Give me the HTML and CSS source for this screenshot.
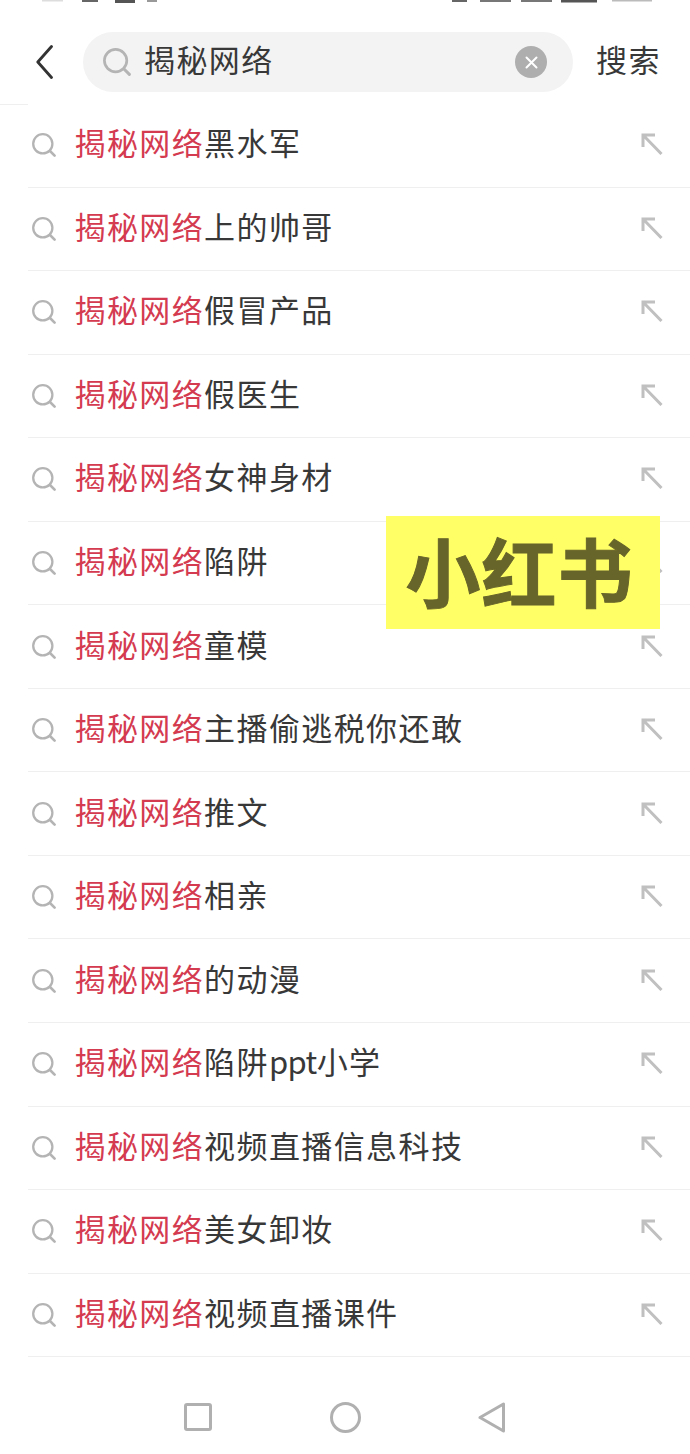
FILE: index.html
```html
<!DOCTYPE html>
<html lang="zh">
<head>
<meta charset="utf-8">
<title>搜索</title>
<link rel="stylesheet" href="styles.css">
</head>
<body>
<div class="phone">
  <svg width="0" height="0" class="defs">
    <symbol id="mag" viewBox="0 0 24 24"><circle cx="10.8" cy="10.8" r="9.6" fill="none" stroke="currentColor" stroke-width="2.3"/><path d="M18 18l4.6 4.6" fill="none" stroke="currentColor" stroke-width="2.6" stroke-linecap="round"/></symbol>
    <symbol id="arrow" viewBox="0 0 22 22"><path d="M2 14V2h12M2 2l18.500 19" fill="none" stroke="currentColor" stroke-width="3"/></symbol>
  </svg>
  <svg class="status" width="690" height="3" viewBox="0 0 690 3">
    <rect x="42" y="0" width="21" height="1.500" fill="#ddd"/>
    <rect x="82" y="0" width="16" height="2" fill="#666"/>
    <rect x="115" y="0" width="20" height="3" fill="#555"/>
    <rect x="147" y="0" width="10" height="2" fill="#999"/>
    <rect x="452" y="0" width="15" height="2" fill="#666"/>
    <rect x="480" y="0" width="31" height="2" fill="#777"/>
    <rect x="521" y="0" width="31" height="2" fill="#777"/>
    <rect x="561" y="0" width="36" height="2.500" fill="#555"/>
    <rect x="612" y="0" width="40" height="1.500" fill="#bbb"/>
  </svg>
  <header class="search-bar">
    <svg class="back" width="17" height="34" viewBox="0 0 17 34"><path d="M15.500 1.500L1.800 17l13.700 15.500" fill="none" stroke="#333" stroke-width="2.800" stroke-linecap="round" stroke-linejoin="round"/></svg>
    <div class="field">
      <svg class="field-mag"><use href="#mag"/></svg>
      <span class="query">揭秘网络</span>
      <span class="clear"><svg width="13" height="13" viewBox="0 0 13 13"><path d="M1.500 1.500l10 10M11.500 1.500l-10 10" stroke="#fff" stroke-width="2" stroke-linecap="round"/></svg></span>
    </div>
    <span class="go">搜索</span>
  </header>
  <div class="stub"></div>
  <ul class="list">
    <li class="row"><svg class="mag"><use href="#mag"/></svg><span class="txt"><em>揭秘网络</em>黑水军</span><svg class="arr"><use href="#arrow"/></svg></li>
    <li class="row"><svg class="mag"><use href="#mag"/></svg><span class="txt"><em>揭秘网络</em>上的帅哥</span><svg class="arr"><use href="#arrow"/></svg></li>
    <li class="row"><svg class="mag"><use href="#mag"/></svg><span class="txt"><em>揭秘网络</em>假冒产品</span><svg class="arr"><use href="#arrow"/></svg></li>
    <li class="row"><svg class="mag"><use href="#mag"/></svg><span class="txt"><em>揭秘网络</em>假医生</span><svg class="arr"><use href="#arrow"/></svg></li>
    <li class="row"><svg class="mag"><use href="#mag"/></svg><span class="txt"><em>揭秘网络</em>女神身材</span><svg class="arr"><use href="#arrow"/></svg></li>
    <li class="row"><svg class="mag"><use href="#mag"/></svg><span class="txt"><em>揭秘网络</em>陷阱</span><svg class="arr"><use href="#arrow"/></svg></li>
    <li class="row"><svg class="mag"><use href="#mag"/></svg><span class="txt"><em>揭秘网络</em>童模</span><svg class="arr"><use href="#arrow"/></svg></li>
    <li class="row"><svg class="mag"><use href="#mag"/></svg><span class="txt"><em>揭秘网络</em>主播偷逃税你还敢</span><svg class="arr"><use href="#arrow"/></svg></li>
    <li class="row"><svg class="mag"><use href="#mag"/></svg><span class="txt"><em>揭秘网络</em>推文</span><svg class="arr"><use href="#arrow"/></svg></li>
    <li class="row"><svg class="mag"><use href="#mag"/></svg><span class="txt"><em>揭秘网络</em>相亲</span><svg class="arr"><use href="#arrow"/></svg></li>
    <li class="row"><svg class="mag"><use href="#mag"/></svg><span class="txt"><em>揭秘网络</em>的动漫</span><svg class="arr"><use href="#arrow"/></svg></li>
    <li class="row"><svg class="mag"><use href="#mag"/></svg><span class="txt"><em>揭秘网络</em>陷阱<span class="latin">ppt</span>小学</span><svg class="arr"><use href="#arrow"/></svg></li>
    <li class="row"><svg class="mag"><use href="#mag"/></svg><span class="txt"><em>揭秘网络</em>视频直播信息科技</span><svg class="arr"><use href="#arrow"/></svg></li>
    <li class="row"><svg class="mag"><use href="#mag"/></svg><span class="txt"><em>揭秘网络</em>美女卸妆</span><svg class="arr"><use href="#arrow"/></svg></li>
    <li class="row"><svg class="mag"><use href="#mag"/></svg><span class="txt"><em>揭秘网络</em>视频直播课件</span><svg class="arr"><use href="#arrow"/></svg></li>
  </ul>
  <nav class="nav">
    <svg width="28" height="28" viewBox="0 0 28 28"><rect x="1.500" y="1.500" width="25" height="25" rx="1.500" fill="none" stroke="#b0b0b0" stroke-width="3"/></svg>
    <svg width="31" height="31" viewBox="0 0 31 31"><circle cx="15.500" cy="15.500" r="14" fill="none" stroke="#b0b0b0" stroke-width="3"/></svg>
    <svg width="27" height="31" viewBox="0 0 27 31"><path d="M2 15.500L25.500 2v27z" fill="none" stroke="#b0b0b0" stroke-width="3" stroke-linejoin="round"/></svg>
  </nav>
  <div class="stamp">小红书</div>
</div>
</body>
</html>
```
FILE: styles.css
```css
* { box-sizing: border-box; }
html, body { margin: 0; padding: 0; background: #fff; }
body { font-family: "Noto Sans CJK SC", "Noto Sans", sans-serif; }
.phone { position: relative; width: 690px; height: 1454px; overflow: hidden; background: #fff; }
.defs { position: absolute; }
.status { display: block; }
.search-bar { display: flex; align-items: center; height: 60px; margin-top: 29px; padding-left: 36px; }
.back { flex: none; margin-right: 30px; }
.field { display: flex; align-items: center; width: 490px; height: 60px; border-radius: 30px; background: #f3f3f3; padding: 0 26px 0 20px; }
.field-mag { width: 28px; height: 28px; color: #b4b4b4; flex: none; margin-right: 13px; }
.query { flex: 1; font-size: 31px; line-height: 40px; padding-bottom: 6px; color: #383838; letter-spacing: 1.400px; }
.clear { display: flex; align-items: center; justify-content: center; width: 32px; height: 32px; border-radius: 50%; background: #aeaeae; }
.go { margin-left: 23px; font-size: 31px; line-height: 40px; padding-bottom: 6px; color: #383838; letter-spacing: 1.400px; }
.stub { width: 28px; height: 1px; margin-top: 12px; background: #efefef; }
.list { list-style: none; margin: -1px 0 0; padding: 0 0 0 28px; }
.row { display: flex; align-items: center; height: 83.55px; border-bottom: 1px solid #efefef; }
.mag { width: 24px; height: 24px; color: #b4b4b4; flex: none; margin: 0 18.500px 0 4px; }
.txt { flex: 1; font-size: 31px; line-height: 40px; padding-bottom: 6px; letter-spacing: 1.400px; color: #383838; }
.txt em { font-style: normal; color: #d43a50; }
.latin { letter-spacing: -0.6px; }
.arr { width: 22px; height: 22px; color: #c0c0c0; flex: none; margin: 0 27px 2px 0; }
.nav { display: flex; align-items: center; gap: 117.500px; margin-top: 44.500px; padding-left: 184px; }
.stamp { position: absolute; left: 386px; top: 516px; width: 274px; height: 113px; padding: 0 7px 6px 0; background: #ffff66; color: #68652a; font-size: 75px; font-weight: 700; -webkit-text-stroke: 1px #68652a; line-height: 107px; text-align: center; letter-spacing: 1px; }
```
